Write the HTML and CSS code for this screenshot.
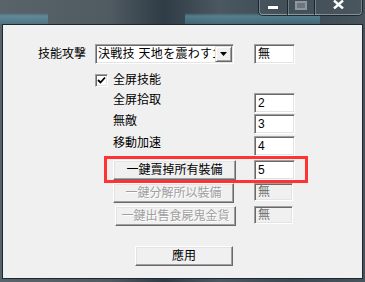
FILE: index.html
```html
<!DOCTYPE html>
<html lang="ja">
<head>
<meta charset="utf-8"/>
<title>設定</title>
<link rel="stylesheet" href="styles.css">
</head>
<body>
<div class="titlebar">
  <div class="caption-btns">
    <span class="cbtn cbtn-min"><i></i></span>
    <span class="cbtn cbtn-max"><i></i></span>
    <span class="cbtn cbtn-close">
      <svg width="11" height="9" viewBox="0 0 11 9"><path d="M1 0.5 L10 8.5 M10 0.5 L1 8.5" stroke="#fff" stroke-width="2.4" fill="none"/></svg>
    </span>
  </div>
</div>

<div class="client">
  <div class="row row-skill">
    <span class="lbl-right">技能攻擊</span>
    <div class="combo">
      <span class="combo-text">決戦技 天地を震わす1</span>
      <span class="combo-btn">
        <svg width="7" height="4" viewBox="0 0 7 4"><path d="M0 0 H7 L3.5 4 Z" fill="#000"/></svg>
      </span>
    </div>
    <div class="edit">無</div>
  </div>

  <div class="row row-check">
    <span class="check">
      <svg width="9" height="9" viewBox="0 0 9 9"><path d="M1 4 L3.5 6.5 L8 1.5" stroke="#000" stroke-width="1.8" fill="none"/></svg>
    </span>
    <span class="lbl">全屏技能</span>
  </div>

  <div class="row row-opt r1">
    <span class="lbl lbl-opt">全屏拾取</span>
    <div class="edit">2</div>
  </div>
  <div class="row row-opt r2">
    <span class="lbl lbl-opt">無敵</span>
    <div class="edit">3</div>
  </div>
  <div class="row row-opt r3">
    <span class="lbl lbl-opt">移動加速</span>
    <div class="edit">4</div>
  </div>

  <div class="row row-btn b1">
    <button class="btn btn-wide">一鍵賣掉所有裝備</button>
    <div class="edit">5</div>
    <span class="mark"></span>
  </div>
  <div class="row row-btn b2">
    <button class="btn btn-off" disabled>一鍵分解所以裝備</button>
    <div class="edit edit-off">無</div>
  </div>
  <div class="row row-btn b3">
    <button class="btn btn-off" disabled>一鍵出售食屍鬼金貨</button>
    <div class="edit edit-off">無</div>
  </div>

  <div class="row row-apply">
    <button class="btn btn-apply">應用</button>
  </div>
</div>
</body>
</html>
```

FILE: styles.css
```css
html, body {
  margin: 0;
  padding: 0;
}
body {
  width: 365px;
  height: 282px;
  overflow: hidden;
  font-family: "Liberation Sans", "Noto Sans CJK JP", "Noto Sans CJK TC", sans-serif;
  font-size: 12px;
  color: #000;
  background:
    linear-gradient(to bottom, rgba(0,0,0,0) 0, rgba(0,0,0,0) 13px, rgba(95,143,160,0.9) 16px, rgba(80,125,142,0.6) 24px, rgba(0,0,0,0) 24px) 0 0 / 48px 282px no-repeat,
    linear-gradient(to bottom, rgba(0,0,0,0) 0, rgba(0,0,0,0) 13px, rgba(86,134,152,0.85) 16px, rgba(74,118,135,0.6) 24px, rgba(0,0,0,0) 24px) 185px 0 / 135px 282px no-repeat,
    linear-gradient(to right, #59636a 0, #4f5a61 30%, #2f3b45 45%, #4b5861 60%, #3a4953 80%, #47545c 100%);
}

/* title bar */
.titlebar {
  height: 24px;
  display: flex;
  justify-content: flex-end;
  align-items: flex-start;
}
.caption-btns {
  display: flex;
  margin-right: 2px;
  height: 15px;
  border: 1px solid rgba(20,28,34,0.8);
  border-top: none;
  border-radius: 0 0 5px 5px;
  box-shadow: inset 0 -1px rgba(255,255,255,0.35), inset 1px 0 rgba(255,255,255,0.25), inset -1px 0 rgba(255,255,255,0.25);
  background: rgba(80,92,100,0.35);
}
.cbtn {
  display: flex;
  justify-content: center;
  align-items: flex-start;
  height: 15px;
}
.cbtn + .cbtn {
  border-left: 1px solid rgba(20,28,34,0.8);
  box-shadow: inset 1px 0 rgba(255,255,255,0.25);
}
.cbtn-min { width: 28px; }
.cbtn-max { width: 26px; }
.cbtn-close { width: 47px; }
.cbtn-min i {
  display: block;
  width: 10px;
  height: 3px;
  margin-top: 6px;
  background: #fff;
  box-shadow: 0 0 1px #222;
}
.cbtn-max i {
  display: block;
  width: 8px;
  height: 5px;
  margin-top: 1px;
  border: 2px solid #8f979c;
  background: #6b757b;
}
.cbtn-close svg {
  display: block;
  margin-top: 0;
}

/* client area */
.client {
  margin: 0 2px;
  height: 253px;
  border: 1px solid #1c2730;
  background: #f0f0f0;
}
.row {
  display: flex;
  position: relative;
}
.lbl {
  line-height: 13px;
  white-space: nowrap;
}
.lbl-right {
  width: 83px;
  padding-right: 9px;
  text-align: right;
  line-height: 13px;
}

/* sunken edit box */
.edit {
  box-sizing: border-box;
  width: 41px;
  height: 20px;
  padding: 2px 0 0 3px;
  line-height: 14px;
  background: #fff;
  border: 1px solid;
  border-color: #a0a0a0 #fff #fff #a0a0a0;
  box-shadow: inset 1px 1px #696969, inset -1px -1px #e3e3e3;
}
.edit-off {
  width: 39px;
  height: 18px;
  padding-top: 1px;
  background: #f0f0f0;
  color: #6d6d6d;
}

.row-skill {
  margin-top: 19px;
  align-items: center;
}
.combo {
  box-sizing: border-box;
  width: 139px;
  height: 20px;
  margin-right: 20px;
  display: flex;
  align-items: stretch;
  background: #fff;
  border: 1px solid;
  border-color: #a0a0a0 #fff #fff #a0a0a0;
  box-shadow: inset 1px 1px #696969, inset -1px -1px #e3e3e3;
  padding: 1px 1px 1px 1px;
}
.combo-text {
  flex: 1;
  overflow: hidden;
  white-space: nowrap;
  padding-left: 1px;
  line-height: 16px;
  letter-spacing: 0.3px;
}
.combo-btn {
  box-sizing: border-box;
  width: 17px;
  display: flex;
  justify-content: center;
  align-items: center;
  background: #f0f0f0;
  border: 1px solid;
  border-color: #e3e3e3 #696969 #696969 #e3e3e3;
  box-shadow: inset 1px 1px #fff, inset -1px -1px #a0a0a0;
}

.row-check {
  margin-top: 10px;
  margin-left: 92px;
  align-items: center;
  height: 13px;
}
.check {
  box-sizing: border-box;
  width: 13px;
  height: 13px;
  margin-right: 5px;
  display: flex;
  justify-content: center;
  align-items: center;
  background: #fff;
  border: 1px solid;
  border-color: #a0a0a0 #fff #fff #a0a0a0;
  box-shadow: inset 1px 1px #696969, inset -1px -1px #e3e3e3;
}

.row-opt {
  align-items: flex-start;
}
.r1 { margin-top: 6px; }
.r2 { margin-top: 1px; }
.r3 { margin-top: 2px; }
.lbl-opt {
  width: 141px;
  margin-left: 110px;
  padding-top: 1px;
}

/* raised push buttons */
.btn {
  box-sizing: border-box;
  height: 20px;
  padding: 0;
  font: inherit;
  line-height: 16px;
  color: #000;
  background: #f0f0f0;
  border: 1px solid;
  border-color: #fff #696969 #696969 #fff;
  box-shadow: inset -1px -1px #a0a0a0, inset 1px 1px #e3e3e3;
  text-align: center;
  white-space: nowrap;
}
.row-btn {
  align-items: flex-start;
}
.b1 { margin-top: 4px; }
.b2 { margin-top: 3px; }
.b3 { margin-top: 3px; }
.b1 .btn {
  width: 123px;
  margin-left: 110px;
  margin-right: 18px;
}
.b2 .btn {
  width: 121px;
  margin-left: 110px;
  margin-right: 20px;
}
.b3 .btn {
  width: 121px;
  margin-left: 112px;
  margin-right: 18px;
}
.btn-off {
  color: #a0a0a0;
  text-shadow: 1px 1px #fff;
}
.mark {
  position: absolute;
  left: 101px;
  top: -4px;
  width: 198px;
  height: 21px;
  border: 3px solid #f33;
}

.row-apply {
  margin-top: 20px;
}
.btn-apply {
  width: 98px;
  margin-left: 132px;
}
```
